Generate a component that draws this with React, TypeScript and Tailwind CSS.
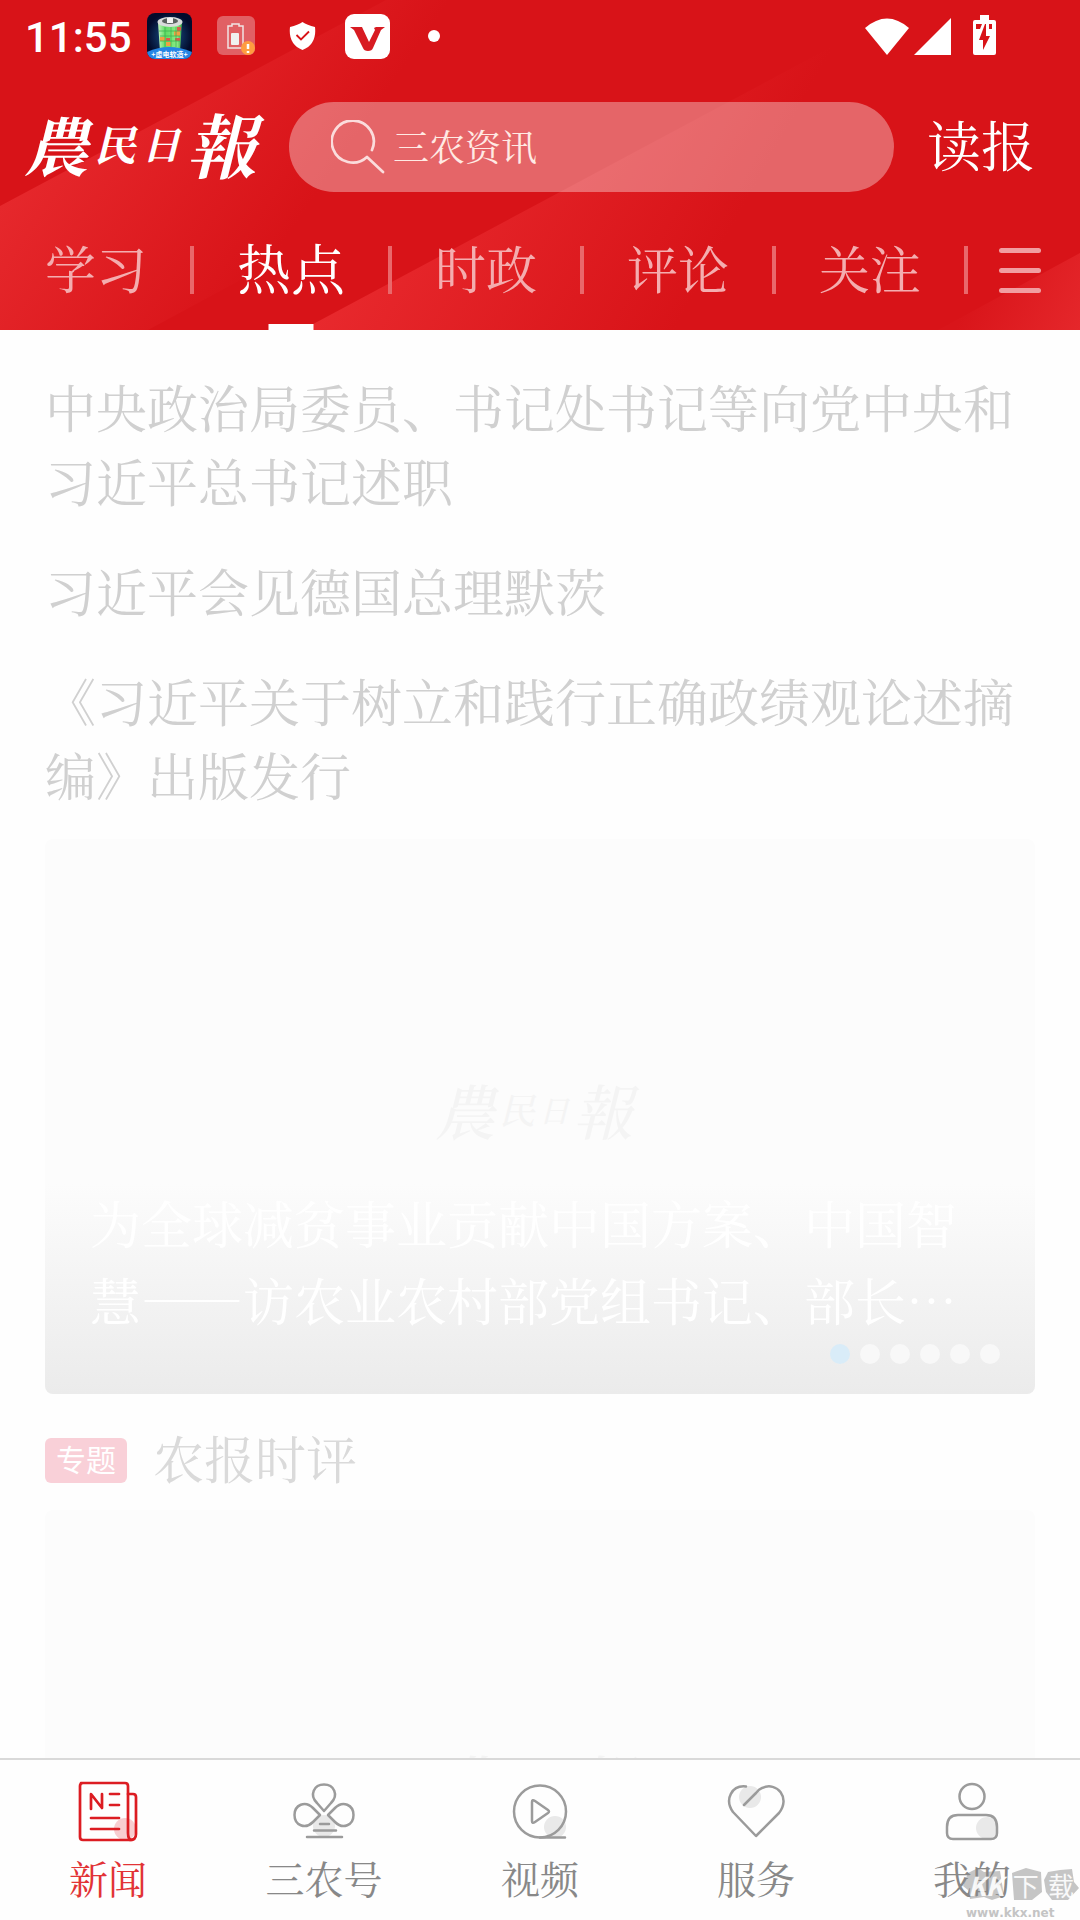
import { useState } from 'react';

const serif = "font-['Noto_Serif_CJK_SC','Noto_Sans_CJK_SC',serif]";

const channels = ['学习', '热点', '时政', '评论', '关注'];

const headlines = [
  '中央政治局委员、书记处书记等向党中央和习近平总书记述职',
  '习近平会见德国总理默茨',
  '《习近平关于树立和践行正确政绩观论述摘编》出版发行',
];

const HeaderBackground = () => (
  <svg className="absolute inset-0 h-full w-full" viewBox="0 0 1080 330" preserveAspectRatio="none" aria-hidden="true">
    <defs>
      <linearGradient id="beamA" gradientUnits="userSpaceOnUse" x1="0" y1="206" x2="210" y2="350">
        <stop offset="0" stopColor="#e6282c" />
        <stop offset="1" stopColor="#d81318" />
      </linearGradient>
      <linearGradient id="beamB" gradientUnits="userSpaceOnUse" x1="313" y1="324" x2="590" y2="480">
        <stop offset="0" stopColor="#e8292d" />
        <stop offset="1" stopColor="#d81318" />
      </linearGradient>
      <linearGradient id="beamC" gradientUnits="userSpaceOnUse" x1="980" y1="280" x2="1080" y2="330">
        <stop offset="0" stopColor="#d9151a" />
        <stop offset="1" stopColor="#e5272b" />
      </linearGradient>
    </defs>
    <rect width="1080" height="330" fill="#d81318" />
    <path d="M0 206 386 0H760L148 330H0Z" fill="url(#beamA)" />
    <path d="M302 330 919 0H1080V190L840 330Z" fill="url(#beamB)" />
    <path d="M938 330 1080 253V330Z" fill="url(#beamC)" />
  </svg>
);

const BatteryAppIcon = () => (
  <svg className="h-[46px] w-[45px]" viewBox="0 0 45 46" aria-hidden="true">
    <defs>
      <radialGradient id="night">
        <stop offset="0" stopColor="#1b5a94" />
        <stop offset="1" stopColor="#030b2c" />
      </radialGradient>
      <linearGradient id="can" x1="0" x2="1" y1="0" y2="0">
        <stop offset="0" stopColor="#c4f5bd" />
        <stop offset="0.3" stopColor="#5fdc63" />
        <stop offset="0.8" stopColor="#8deb86" />
        <stop offset="1" stopColor="#3aa445" />
      </linearGradient>
      <clipPath id="appClip">
        <rect width="45" height="46" rx="8" />
      </clipPath>
    </defs>
    <g clipPath="url(#appClip)">
      <rect width="45" height="46" fill="url(#night)" />
      <path d="M11 9 13 39H33L35 9Z" fill="url(#can)" />
      <path d="M27 18h6v5h-6zM13 24h5v4h-5zM19 29h5v4h-5z" fill="#f0a043" />
      <path d="M30 14h4v4h-4zM19 25h4v3h-4zM28 25h5v3h-5z" fill="#e0584a" />
      <path d="M12 18h22M13 23h20M13 28h20M18 14v20M24 14v20M29 14v20" stroke="#3fb350" strokeWidth="0.8" fill="none" />
      <ellipse cx="23" cy="9" rx="12.500" ry="5" fill="#d9dcdc" />
      <ellipse cx="23" cy="8" rx="8" ry="3" fill="#59615f" />
      <path d="M20 5h6v5h-6z" fill="#f4f4f4" />
      <path d="M0 39Q22 29 45 39V46H0Z" fill="#2585e4" />
    </g>
    <text x="22.500" y="44" textAnchor="middle" fontSize="7" fontWeight="700" fill="#fff" fontFamily="Noto Sans CJK SC, sans-serif">+虚电软造+</text>
  </svg>
);

const StatusBar = () => (
  <div className="relative flex h-[72px] items-center pr-[81px] pl-[25px] text-white">
    <span className="w-[106px] pt-[3px] font-['Roboto',sans-serif] text-[42px] leading-[48px] font-medium">11:55</span>
    <div className="ml-4 flex flex-1 items-center">
      <BatteryAppIcon />
      <svg className="ml-[25px] h-10 w-[39px]" viewBox="0 0 39 40" aria-hidden="true">
        <rect width="38" height="39" rx="6" fill="#e16064" />
        <path d="M11 10h4V8h7v2h4v22H11Z" fill="none" stroke="#f0e4e4" strokeWidth="1.500" />
        <rect x="14" y="17" width="8" height="12" rx="1" fill="#f0f0f0" />
        <circle cx="31" cy="32" r="7" fill="#ff9c40" />
        <path d="M31 28v5M31 35v2" stroke="#fff" strokeWidth="2.500" />
      </svg>
      <svg className="ml-[33px] h-[30px] w-[27px]" viewBox="0 0 27 30" aria-hidden="true">
        <path d="M13.500 1Q18 4 26 6Q28 23 13.500 29Q-1 23 1 6Q9 4 13.500 1Z" fill="#fff" />
        <path d="m7.500 14 4.500 4.500 8-8" fill="none" stroke="#d81318" strokeWidth="1.800" />
      </svg>
      <svg className="ml-[29px] h-[45px] w-[45px]" viewBox="0 0 45 45" aria-hidden="true">
        <rect width="45" height="45" rx="9" fill="#fff" />
        <path d="M5 13H17L24 28 30 16 29 14 31 13H40L36 16 28 34Q27 37 23 37Q19 37 18 34L9 16Z" fill="#d81b22" />
      </svg>
      <span className="ml-[38px] h-3 w-3 rounded-full bg-white" />
    </div>
    <svg className="h-[42px] w-[134px]" viewBox="0 0 134 42" fill="#fff" aria-hidden="true">
      <path d="M0 13Q22 -6 44 13L22 40Z" />
      <path d="M86 3V40H49Z" />
      <path d="M115 0h9v5h5q2 0 2 2v31q0 2-2 2h-19q-2 0-2-2V7q0-2 2-2h5Z" />
      <path d="m120 9-6 16h4v10l7-14h-4V9ZM111 9h6l-2 5h-4ZM124 9h3v5h-3Z" fill="#d81318" />
    </svg>
  </div>
);

const Logo = () => (
  <span className={`flex items-center gap-[6px] pb-2 font-bold text-white italic ${serif}`}>
    <span className="text-[64px] leading-[80px]">農</span>
    <span className="text-[42px] leading-[80px]">民</span>
    <span className="text-[38px] leading-[80px]">日</span>
    <span className="text-[70px] leading-[80px]">報</span>
  </span>
);

const CoverLogo = () => (
  <span className={`flex items-center gap-1 pr-3 pb-4 font-medium text-[#f4f4f4] italic ${serif}`}>
    <span className="text-[60px] leading-[80px]">農</span>
    <span className="text-[36px] leading-[80px]">民</span>
    <span className="text-[30px] leading-[80px]">日</span>
    <span className="text-[60px] leading-[80px]">報</span>
  </span>
);

const NewsIcon = () => (
  <svg className="h-16 w-16" viewBox="0 0 64 64" fill="none" stroke="currentColor" strokeWidth="2.700" strokeLinecap="round" strokeLinejoin="round" aria-hidden="true">
    <circle cx="49" cy="49" r="11" fill="#f8cdd0" stroke="none" />
    <path d="M5 3H49q3 0 3 3V53q0 7 4 7H7q-3 0-3-3V6q0-3 3-3" />
    <path d="M52 14h5q3 0 3 3v37q0 6-6 6M15 29V14l11 14V14M34 14h9M34 25h9M15 38h28M15 49h28" />
  </svg>
);

const CloverIcon = () => (
  <svg className="h-16 w-16" viewBox="0 0 64 64" fill="none" stroke="currentColor" strokeWidth="2.500" strokeLinecap="round" strokeLinejoin="round" aria-hidden="true">
    <circle cx="32" cy="46" r="11" fill="#e9e9e9" stroke="none" />
    <path d="M32 31 25 23C17 15 22 4.500 32 4.500S47 15 39 23Z" />
    <path d="M28 35 21 28C13 20 2.500 25 2.500 35S13 50 21 42ZM36 35l7-7c8-8 18.500-3 18.500 7S51 50 43 42Z" />
    <path d="M28 44h9M22 50.500h22M15 57h35" />
  </svg>
);

const VideoIcon = () => (
  <svg className="h-16 w-16" viewBox="0 0 64 64" fill="none" stroke="currentColor" strokeWidth="2.500" strokeLinecap="round" strokeLinejoin="round" aria-hidden="true">
    <circle cx="47" cy="47" r="11" fill="#e9e9e9" stroke="none" />
    <circle cx="32" cy="31.500" r="26" />
    <path d="M32 57.500h25M24 22v19q0 3 3 1l13-9q2-1.500 0-3L27 21q-3-2-3 1Z" />
  </svg>
);

const HeartIcon = () => (
  <svg className="h-16 w-16" viewBox="0 0 64 64" fill="none" stroke="currentColor" strokeWidth="2.500" strokeLinecap="round" strokeLinejoin="round" aria-hidden="true">
    <circle cx="26" cy="17" r="11" fill="#e9e9e9" stroke="none" />
    <path d="M22 6.500C8 5 0 19 9 32L32 56 55 33C67 18 53 1 38 8q-3 1-6 5L20 25" />
  </svg>
);

const UserIcon = () => (
  <svg className="h-16 w-16" viewBox="0 0 64 64" fill="none" stroke="currentColor" strokeWidth="2.500" strokeLinecap="round" strokeLinejoin="round" aria-hidden="true">
    <circle cx="47" cy="48" r="11" fill="#e9e9e9" stroke="none" />
    <circle cx="32" cy="16.500" r="12.500" />
    <path d="M18 35H46q11 0 11 12v6q0 6-6 6H13q-6 0-6-6v-6Q7 35 18 35Z" />
  </svg>
);

const tabs = [
  { name: '新闻', icon: <NewsIcon /> },
  { name: '三农号', icon: <CloverIcon /> },
  { name: '视频', icon: <VideoIcon /> },
  { name: '服务', icon: <HeartIcon /> },
  { name: '我的', icon: <UserIcon /> },
];

const Watermark = () => (
  <div className="pointer-events-none absolute right-0 bottom-0 flex flex-col gap-1">
    <div className="relative">
      <svg className="h-[34px] w-[118px]" viewBox="0 0 118 34" fill="#888" fillOpacity="0.48" aria-hidden="true">
        <path d="M6 5 16 0 22 4 38 3 42 28 30 32 22 29 8 31 6 22 1 18ZM50 5 64 0 79 4 80 24 70 32 52 32ZM86 4 98 2 110 1 112 14 117 20 106 32 90 32 84 24 82 12Z" />
      </svg>
      <span className="absolute inset-0 flex items-center justify-between pr-[6px] pl-[6px] font-['Noto_Sans_CJK_SC',sans-serif] text-[26px] leading-8 text-white/90">
        <span className="font-bold italic">KK</span>
        <span>下</span>
        <span>载</span>
      </span>
    </div>
    <span className="pl-1 font-['DejaVu_Sans',sans-serif] text-[12px] leading-[14px] font-bold text-[#c4c4c4]">www.kkx.net</span>
  </div>
);

const App = () => {
  const [channel, setChannel] = useState('热点');
  const [tab, setTab] = useState('新闻');

  return (
    <div lang="zh-CN" className={`flex h-screen flex-col overflow-hidden bg-[#fefefe] [font-kerning:none] ${serif}`}>
      <header className="relative shrink-0 overflow-hidden text-white">
        <HeaderBackground />
        <StatusBar />

        <div className="relative flex items-center pt-[30px] pr-[45px] pl-6">
          <a href="#home" className="w-[265px] shrink-0">
            <Logo />
          </a>
          <label className="flex h-[90px] flex-1 items-center rounded-full bg-white/35 pl-[42px]">
            <svg className="h-[54px] w-[54px] shrink-0" viewBox="0 0 54 54" fill="none" stroke="#fbdcdc" strokeWidth="2.700" strokeLinecap="round" strokeLinejoin="round" aria-hidden="true">
              <path d="M41 30A21 21 0 1 0 36 37L52 52" />
            </svg>
            <input type="text" aria-label="搜索" placeholder="三农资讯" className="mb-[3px] ml-2 w-full min-w-0 bg-transparent text-[36px] leading-[54px] outline-none placeholder:text-[#ffeae4]" />
          </label>
          <button type="button" className="ml-[33px] pb-[6px] text-[54px] leading-[80px]">读报</button>
        </div>

        <nav className="relative flex h-[138px] items-center justify-between pr-[39px] pl-[45px]">
          {channels.map((name) => (
            <div key={name} className="contents">
              <button
                type="button"
                onClick={() => setChannel(name)}
                className={
                  name === channel
                    ? 'relative flex h-full items-center pt-3 text-[54px] leading-[80px] text-white after:absolute after:bottom-0 after:left-1/2 after:h-[6px] after:w-[45px] after:-translate-x-1/2 after:bg-white'
                    : 'flex h-full items-center pt-3 text-[51px] leading-[80px] text-[#f4adaf]'
                }
              >
                {name}
              </button>
              <span className="mt-[18px] h-12 w-1 bg-[#e9686b]" />
            </div>
          ))}
          <button type="button" aria-label="频道" className="mt-[18px] -ml-3 flex flex-col gap-[15px]">
            <span className="h-[5px] w-[42px] rounded-full bg-[#f19ea1]" />
            <span className="h-[5px] w-[42px] rounded-full bg-[#f19ea1]" />
            <span className="h-[5px] w-[42px] rounded-full bg-[#f19ea1]" />
          </button>
        </nav>
      </header>

      <main className="min-h-0 flex-1 overflow-hidden px-[45px] pt-[39px]">
        <div className="flex flex-col gap-9 text-[51px] leading-[74px] text-[#d0d0d0]">
          {headlines.map((title) => (
            <a key={title} href="#article">{title}</a>
          ))}
        </div>

        <a href="#feature" className="relative mt-7 flex h-[555px] items-center justify-center overflow-hidden rounded-lg bg-[#fcfcfc]">
          <CoverLogo />
          <div className="absolute inset-x-0 bottom-0 bg-linear-to-b from-[#fcfcfc]/0 to-[#ebebeb] px-[45px] pb-14">
            <p className="text-[51px] leading-[77px] text-white">
              为全球减贫事业贡献中国方案、中国智慧——访农业农村部党组书记、部长…
            </p>
          </div>
          <div className="absolute right-[35px] bottom-[30px] flex gap-[10px]">
            <span className="h-5 w-5 rounded-full bg-[#d9ecf8]" />
            {[2, 3, 4, 5, 6].map((n) => (
              <span key={n} className="h-5 w-5 rounded-full bg-[#f8f8f8]" />
            ))}
          </div>
        </a>

        <div className="mt-[26px] flex items-center">
          <span className="mt-[6px] h-[45px] rounded-md bg-[#f9d0d8] px-[11px] font-['Noto_Sans_CJK_SC',sans-serif] text-[30px] leading-10 text-white">专题</span>
          <h2 className="ml-[26px] text-[51px] leading-[74px] text-[#dadada]">农报时评</h2>
        </div>

        <a href="#topic" className="mt-4 flex h-[555px] items-center justify-center rounded-lg bg-[#fcfcfc]">
          <CoverLogo />
        </a>
      </main>

      <nav className="relative grid h-[162px] shrink-0 grid-cols-5 border-t-2 border-[#d9d9d9] bg-[#fefefe]">
        {tabs.map(({ name, icon }) => (
          <button
            key={name}
            type="button"
            onClick={() => setTab(name)}
            className={`flex flex-col items-center pt-5 ${name === tab ? 'text-[#dc1c22]' : 'text-[#9b9b9b]'}`}
          >
            {icon}
            <span className={`text-[39px] leading-[66px] ${name === tab ? 'text-[#e23336]' : 'text-[#888]'}`}>{name}</span>
          </button>
        ))}
        <Watermark />
      </nav>
    </div>
  );
};

export default App;
